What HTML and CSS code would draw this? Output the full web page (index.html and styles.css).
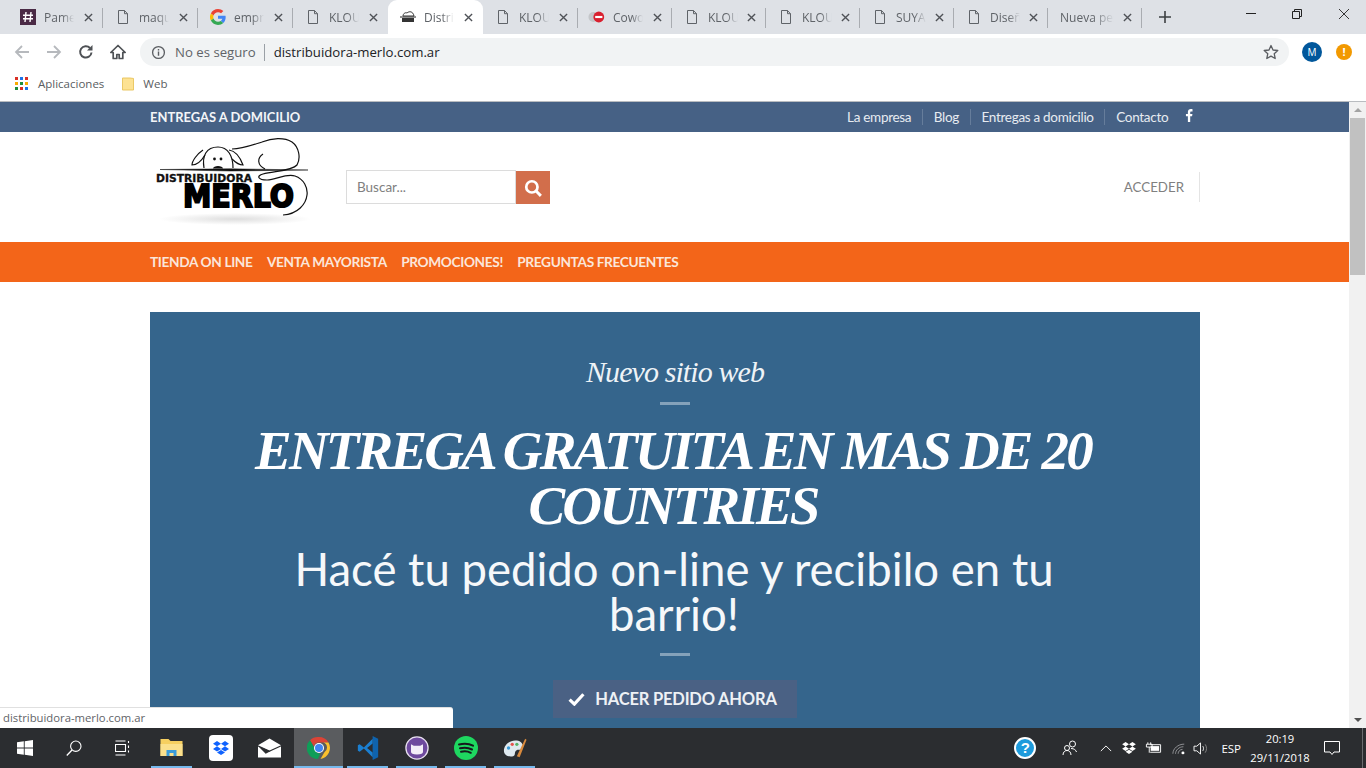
FILE: index.html
```html
<!DOCTYPE html>
<html lang="es">
<head>
<meta charset="utf-8">
<title>Distribuidora Merlo</title>
<link rel="stylesheet" href="styles.css">
</head>
<body>
<svg class="defs" width="0" height="0" aria-hidden="true">
  <symbol id="doc" viewBox="0 0 16 16"><path d="M3.500 1.500h6l3 3.200v9.800h-9zM9.500 1.500v3.200h3" fill="none" stroke="#5f6368" stroke-width="1"/></symbol>
  <symbol id="x" viewBox="0 0 10 10"><path d="M1 1l8 8M9 1l-8 8" fill="none" stroke="#4f5257" stroke-width="1.500"/></symbol>
</svg>
<div class="browser">
  <div class="tabstrip">
    <div class="tab"><svg class="fav" viewBox="0 0 16 16"><rect width="16" height="16" fill="#4a2a45"/><path d="M6 3L5 13M11 3l-1 10M3 6.300h10M3 9.800h10" stroke="#fff" stroke-width="1.400"/></svg><span class="ttl">Pamela</span><svg class="cl"><use href="#x"/></svg></div>
    <div class="tab"><svg class="fav"><use href="#doc"/></svg><span class="ttl">maquina</span><svg class="cl"><use href="#x"/></svg></div>
    <div class="tab"><svg class="fav" viewBox="0 0 48 48"><path fill="#ea4335" d="M24 9.500c3.500 0 6.700 1.300 9.200 3.400l6.800-6.800C35.900 2.400 30.300 0 24 0 14.600 0 6.500 5.400 2.600 13.200l7.900 6.100C12.400 13.700 17.700 9.500 24 9.500z"/><path fill="#4285f4" d="M47 24.500c0-1.600-.2-3.200-.4-4.500H24v9h12.900c-.6 3-2.300 5.500-4.800 7.200l7.700 6C44.300 37.600 47 31.600 47 24.500z"/><path fill="#fbbc05" d="M10.500 28.700a14.400 14.400 0 0 1 0-9.400l-7.900-6.100a24 24 0 0 0 0 21.600z"/><path fill="#34a853" d="M24 48c6.500 0 11.900-2.100 15.800-5.800l-7.700-6c-2.100 1.400-4.900 2.300-8.100 2.300-6.300 0-11.600-4.200-13.500-9.800l-7.900 6.100C6.500 42.600 14.600 48 24 48z"/></svg><span class="ttl">empresa</span><svg class="cl"><use href="#x"/></svg></div>
    <div class="tab tab-last"><svg class="fav"><use href="#doc"/></svg><span class="ttl">KLOUD</span><svg class="cl"><use href="#x"/></svg></div>
    <div class="tab tab-active"><svg class="fav" viewBox="0 0 16 16"><path d="M3 7c0-2 2-4 4-3 2-2 6-2 7 3z" fill="none" stroke="#333" stroke-width="1"/><path d="M0 8h16" stroke="#222" stroke-width="1"/><rect x="2" y="9" width="12" height="4" fill="#333"/></svg><span class="ttl">Distribuidora</span><svg class="cl"><use href="#x"/></svg></div>
    <div class="tab tab-after"><svg class="fav"><use href="#doc"/></svg><span class="ttl">KLOUD</span><svg class="cl"><use href="#x"/></svg></div>
    <div class="tab"><svg class="fav fav-wide" viewBox="0 0 20 16"><circle cx="6" cy="8" r="5.500" fill="#c4c6c9"/><circle cx="12" cy="8" r="6" fill="#d9202f"/><rect x="8" y="6.800" width="8" height="2.400" fill="#fff"/></svg><span class="ttl ttl-s">Coworking</span><svg class="cl"><use href="#x"/></svg></div>
    <div class="tab"><svg class="fav"><use href="#doc"/></svg><span class="ttl">KLOUD</span><svg class="cl"><use href="#x"/></svg></div>
    <div class="tab"><svg class="fav"><use href="#doc"/></svg><span class="ttl">KLOUD</span><svg class="cl"><use href="#x"/></svg></div>
    <div class="tab"><svg class="fav"><use href="#doc"/></svg><span class="ttl">SUYAI</span><svg class="cl"><use href="#x"/></svg></div>
    <div class="tab"><svg class="fav"><use href="#doc"/></svg><span class="ttl">Diseño</span><svg class="cl"><use href="#x"/></svg></div>
    <div class="tab tab-nofav"><span class="ttl ttl-w">Nueva pestaña</span><svg class="cl"><use href="#x"/></svg></div>
    <svg class="plus" viewBox="0 0 12 12"><path d="M6 0v12M0 6h12" stroke="#3c4043" stroke-width="1.600"/></svg>
    <div class="winctl">
      <svg viewBox="0 0 10 10"><path d="M0 4.500h10" stroke="#222" stroke-width="1"/></svg>
      <svg viewBox="0 0 10 10"><path d="M.5 2.500h7v7h-7zM2.500 2.500v-2h7v7h-2" fill="none" stroke="#222"/></svg>
      <svg viewBox="0 0 10 10"><path d="M0 0l10 10M10 0L0 10" stroke="#222" stroke-width=".9"/></svg>
    </div>
  </div>
  <div class="toolbar">
    <svg class="tb" viewBox="0 0 16 16"><path d="M15 8H2M8 2L2 8l6 6" fill="none" stroke="#b6b9bd" stroke-width="1.800"/></svg>
    <svg class="tb" viewBox="0 0 16 16"><path d="M1 8h13M8 2l6 6-6 6" fill="none" stroke="#b6b9bd" stroke-width="1.800"/></svg>
    <svg class="tb" viewBox="0 0 16 16"><path d="M13.500 8.500A5.700 5.700 0 1 1 12 4" fill="none" stroke="#4e5155" stroke-width="2"/><path d="M14.500 1v5.500h-5.500z" fill="#4e5155"/></svg>
    <svg class="tb" viewBox="0 0 16 16"><path d="M8 1.500L.8 8.500h2.400v6h3.600v-4h2.400v4h3.600v-6h2.400z" fill="none" stroke="#4e5155" stroke-width="1.700" stroke-linejoin="round"/></svg>
    <div class="omnibox">
      <svg class="info" viewBox="0 0 16 16"><circle cx="8" cy="8" r="6.300" fill="none" stroke="#5a5d61" stroke-width="1.400"/><path d="M8 7v4.500M8 4.300v1.500" stroke="#5a5d61" stroke-width="1.500"/></svg>
      <span class="insecure">No es seguro</span>
      <span class="url">distribuidora-merlo.com.ar</span>
      <svg class="star" viewBox="0 0 16 16"><path d="M8 1.500l2 4.500 4.800.5-3.600 3.200 1 4.800L8 12.100 3.800 14.500l1-4.800L1.200 6.500 6 6z" fill="none" stroke="#5a5d61" stroke-width="1.300" stroke-linejoin="round"/></svg>
    </div>
    <span class="avatar">M</span>
    <span class="alert">!</span>
  </div>
  <div class="bookmarks">
    <svg class="apps" viewBox="0 0 13 13"><g><rect width="3" height="3" fill="#d93025"/><rect x="5" width="3" height="3" fill="#1a73e8"/><rect x="10" width="3" height="3" fill="#d93025"/><rect y="5" width="3" height="3" fill="#f9ab00"/><rect x="5" y="5" width="3" height="3" fill="#1e8e3e"/><rect x="10" y="5" width="3" height="3" fill="#f9ab00"/><rect y="10" width="3" height="3" fill="#1e8e3e"/><rect x="5" y="10" width="3" height="3" fill="#d93025"/><rect x="10" y="10" width="3" height="3" fill="#1a73e8"/></g></svg>
    <span class="bm">Aplicaciones</span>
    <svg class="folder" viewBox="0 0 13 14"><path d="M.5.500h8l4 .5v12.500H.5z" fill="#fde293" stroke="#e8c35a"/></svg>
    <span class="bm">Web</span>
  </div>
</div>

<div class="viewport">
  <main class="page">
    <div class="topbar">
      <strong class="topbar-title">ENTREGAS A DOMICILIO</strong>
      <nav class="toplinks">
        <a>La empresa</a><a>Blog</a><a>Entregas a domicilio</a><a>Contacto</a>
        <svg class="fb" viewBox="0 0 8 14"><path d="M5.300 14V7.800h2l.4-2.500H5.300V3.800c0-.8.200-1.200 1.200-1.200h1.300V.2C7.500.100 6.800 0 6 0 4.100 0 2.800 1.100 2.800 3.300v2H.7v2.500h2.100V14z" fill="#fff"/></svg>
      </nav>
    </div>
    <header class="masthead">
      <svg class="logo" viewBox="0 0 170 100">
        <defs><radialGradient id="sh"><stop offset="0" stop-color="#dedede"/><stop offset="1" stop-color="#fff"/></radialGradient></defs>
        <ellipse cx="85" cy="87" rx="76" ry="6" fill="url(#sh)"/>
        <path d="M10 37.500L80 36.800 158 38 80 39z" fill="#111" stroke="#111" stroke-width=".5"/>
        <g fill="none" stroke="#111" stroke-width="1.200">
          <path d="M54 36C52 24 56 15 68 15 78 15 83 24 83 36"/>
          <path d="M53 18C47 22 42 29 42 33 47 33 52 28 55 23"/>
          <path d="M79 18C86 19 90 25 93 33 88 33 84 29 82 27"/>
          <path d="M82 17C92 17 100 14 112 10 122 6 134 5 142 10 149 15 151 26 147 33 142 39 124 39 113 42 106 44 108 48 117 48 126 48 136 41 145 44 154 47 158 56 157 63 156 72 148 82 133 83"/>
          <path d="M113 22C107 26 107 33 115 37"/>
        </g>
        <circle cx="64.500" cy="27" r="1.400" fill="#111"/><circle cx="71" cy="27" r="1.400" fill="#111"/>
        <path d="M63 36.500c0-3.500 10-3.500 10 0z" fill="#111"/>
        <text class="logo-small" x="6" y="49.500" textLength="96" lengthAdjust="spacingAndGlyphs">DISTRIBUIDORA</text>
        <text class="logo-big" x="33" y="75" textLength="111" lengthAdjust="spacingAndGlyphs">MERLO</text>
      </svg>
      <form class="search">
        <span class="search-input">Buscar...</span>
        <span class="search-btn"><svg viewBox="0 0 16 16"><circle cx="7" cy="7" r="5" fill="none" stroke="#fff" stroke-width="2.400"/><path d="M10.500 10.500L15 15" stroke="#fff" stroke-width="2.600"/></svg></span>
      </form>
      <a class="login">ACCEDER</a>
    </header>
    <nav class="mainnav">
      <a>TIENDA ON LINE</a><a>VENTA MAYORISTA</a><a>PROMOCIONES!</a><a>PREGUNTAS FRECUENTES</a>
    </nav>
    <section class="hero">
      <p class="kicker">Nuevo sitio web</p>
      <i class="rule"></i>
      <h1>ENTREGA GRATUITA EN MAS DE 20 COUNTRIES</h1>
      <h2>Hacé tu pedido on-line y recibilo en tu barrio!</h2>
      <i class="rule rule-2"></i>
      <a class="cta"><svg viewBox="0 0 16 13"><path d="M1.500 7l4.500 4.300L14.500 2" fill="none" stroke="#fff" stroke-width="3"/></svg>HACER PEDIDO AHORA</a>
    </section>
  </main>
  <div class="scrollbar">
    <span class="arrow-up"></span>
    <span class="thumb"></span>
    <span class="arrow-down"></span>
  </div>
  <div class="status">distribuidora-merlo.com.ar</div>
</div>

<footer class="taskbar">
  <div class="slot"><svg class="ic" viewBox="0 0 16 16"><path d="M0 2.300L6.800 1.300V7.500H0zM7.700 1.200L16 0V7.500H7.700zM0 8.400h6.800v6.300L0 13.700zM7.700 8.400H16V16L7.700 14.800z" fill="#fff"/></svg></div>
  <div class="slot"><svg class="ic" viewBox="0 0 16 16"><circle cx="9.800" cy="6.200" r="5.200" fill="none" stroke="#fff" stroke-width="1.100"/><path d="M6 10L.8 15.500" stroke="#fff" stroke-width="1.300"/></svg></div>
  <div class="slot"><svg class="ic" viewBox="0 0 16 16"><path d="M.5 4.500h10v7H.5zM.5 1h10M.5 15h10M13.500 1v2M13.500 5.500v2.500M13.500 10.500v2" fill="none" stroke="#fff" stroke-width="1.100"/></svg></div>
  <div class="slot slot-app on"><svg class="ic ic-l" viewBox="0 0 22 20"><path d="M0 1h8l2 2h12v15H0z" fill="#f6cf60"/><path d="M0 6h22v12H0z" fill="#fbe08c"/><path d="M6 12h10v6H6z" fill="#3a9bd9"/><path d="M9 15h4v3H9z" fill="#fbe08c"/></svg></div>
  <div class="slot slot-app"><span class="dbx"><svg viewBox="0 0 16 14"><path d="M4 0L0 2.700l4 2.600 4-2.600zM12 0L8 2.700l4 2.600 4-2.600zM0 8l4 2.600L8 8 4 5.300zM12 5.300L8 8l4 2.600L16 8zM4 11.500L8 14l4-2.500L8 9z" fill="#0f62fe"/></svg></span></div>
  <div class="slot slot-app"><svg class="ic ic-l" viewBox="0 0 24 20"><path d="M0 7L12 0l12 7-12 5.500z" fill="#fff"/><path d="M0 8.500v11.500h24V8.500L12 14z" fill="#fff"/><path d="M0 8l13 5.500L8 16z" fill="#2b2d30"/></svg></div>
  <div class="slot slot-app on active"><svg class="ic ic-xl" viewBox="0 0 48 48"><path d="M24 2a22 22 0 0 1 19 11H24a11 11 0 0 0-10.500 7.600L6 8.500A22 22 0 0 1 24 2z" fill="#db4437"/><path d="M43 13a22 22 0 0 1-16 32.800l7.500-13A11 11 0 0 0 33 13z" fill="#fbc02d"/><path d="M6 8.500l9 16a11 11 0 0 0 12 10.500L21.500 46A22 22 0 0 1 6 8.500z" fill="#0f9d58"/><circle cx="24" cy="24" r="10" fill="#fff"/><circle cx="24" cy="24" r="8" fill="#4285f4"/></svg></div>
  <div class="slot slot-app on"><svg class="ic ic-xl" viewBox="0 0 24 26"><path d="M17 0l6 3v20l-6 3z" fill="#0f63ad"/><path d="M17 3L7.500 12.500 3 9 1 10v6l2 1 4.500-3.500L17 23V18l-6-5 6-5z" fill="#1b7fd1"/></svg></div>
  <div class="slot slot-app on"><svg class="ic ic-xl" viewBox="0 0 26 26"><circle cx="13" cy="13" r="12" fill="#6e4a9e" stroke="#e8e0f0" stroke-width="1.400"/><path d="M6.500 9l3 1.500h7l3-1.500v8c0 2-2 3-6.500 3s-6.500-1-6.500-3z" fill="#f3eef8"/></svg></div>
  <div class="slot slot-app on"><svg class="ic ic-xl" viewBox="0 0 24 24"><circle cx="12" cy="12" r="12" fill="#1ed760"/><path d="M5 8.500c5-1.300 10-1 14 1.200M6 12.300c4-1 8.500-.7 12 1.200M7 15.800c3.500-.8 7-.5 9.800 1" fill="none" stroke="#16191c" stroke-width="2" stroke-linecap="round"/></svg></div>
  <div class="slot slot-app on"><svg class="ic ic-xl" viewBox="0 0 26 26"><path d="M1 16C1 9 8 4 15 5c6 1 8 6 6 9-2 2-5 0-7 2s0 5-3 6c-5 1-10-1-10-6z" fill="#dfe9ef"/><circle cx="6" cy="13" r="1.800" fill="#3a9bd9"/><circle cx="10" cy="9" r="1.800" fill="#e6534e"/><circle cx="15" cy="9" r="1.800" fill="#57b36a"/><path d="M15 22L24 3l1.500 1L18 23z" fill="#d98a3d"/></svg></div>
  <div class="tray">
    <span class="help">?</span>
    <svg class="tr tr-people" viewBox="0 0 16 16"><circle cx="10.500" cy="4" r="3" fill="none" stroke="#fff"/><circle cx="5" cy="8" r="2.500" fill="none" stroke="#fff"/><path d="M1 15c0-3 2-4.500 4-4.500s4 1.500 4 4.500M9 8.500c3 0 5 1.500 5.500 3.500" fill="none" stroke="#fff"/></svg>
    <svg class="tr tr-chev" viewBox="0 0 14 8"><path d="M1 7l6-6 6 6" fill="none" stroke="#fff" stroke-width="1.100"/></svg>
    <svg class="tr tr-dbx" viewBox="0 0 16 14"><path d="M4 0L0 2.700l4 2.600 4-2.600zM12 0L8 2.700l4 2.600 4-2.600zM0 8l4 2.600L8 8 4 5.300zM12 5.300L8 8l4 2.600L16 8zM4 11.500L8 14l4-2.500L8 9z" fill="#fff"/></svg>
    <svg class="tr tr-bat" viewBox="0 0 18 12"><path d="M3 0v2M6 0v2M1.500 2h6v3h-6zM4.500 5v6" fill="none" stroke="#fff"/><path d="M5.500 2.500h11v8h-11" fill="none" stroke="#fff"/><rect x="6" y="4" width="9" height="5" fill="#fff"/></svg>
    <svg class="tr tr-wifi" viewBox="0 0 16 14"><path d="M1 13c0-6 6-11 13-11M4 13c0-4 4-8 9-8M7 13c0-2.500 2-5 5-5" fill="none" stroke="#9a9c9f" stroke-width="1"/><circle cx="12.500" cy="12" r="1.700" fill="#fff"/></svg>
    <svg class="tr tr-vol" viewBox="0 0 16 14"><path d="M1 4.500h3L8 1v12L4 9.500H1z" fill="none" stroke="#fff"/><path d="M10.500 4.500c1 1.500 1 3.500 0 5" fill="none" stroke="#fff"/><path d="M13 2.500c2 2.500 2 6.500 0 9" fill="none" stroke="#888"/></svg>
    <span class="lang">ESP</span>
    <span class="clock"><span>20:19</span><span>29/11/2018</span></span>
    <svg class="tr tr-note" viewBox="0 0 16 16"><path d="M.5 1.500h15v10.500H10L8 14.500 6 12H.5z" fill="none" stroke="#fff"/></svg>
    <i class="showdesk"></i>
  </div>
</footer>
</body>
</html>
```
FILE: styles.css
```css
* { box-sizing: border-box; }
html, body { margin: 0; height: 768px; overflow: hidden; }
body { display: flex; flex-direction: column; background: #fff; font-family: "Open Sans", "Noto Sans", sans-serif; }
.defs { position: absolute; }
a { color: inherit; text-decoration: none; }

/* browser chrome */
.browser { flex: 0 0 101px; display: flex; flex-direction: column; }
.tabstrip { flex: 0 0 34px; display: flex; align-items: center; padding-left: 8px; background: #dee1e6; }
.tab { flex: 0 0 94px; height: 34px; display: flex; align-items: center; padding: 0 10px 0 12px; font-size: 12px; color: #5f6368; position: relative; }
.tab:nth-child(-n+6) { flex-basis: 95px; }
.tab::after { content: ""; position: absolute; right: 0; top: 8px; height: 20px; width: 1px; background: #a9acb1; }
.tab-last::after, .tab-active::after { display: none; }
.tab-active { background: #fff; border-radius: 9px 9px 0 0; }
.fav { width: 16px; height: 16px; flex: none; margin-right: 8px; }
.fav-wide { width: 18px; margin-right: 7px; margin-left: -2px; }
.ttl { width: 30px; flex: none; overflow: hidden; white-space: nowrap; -webkit-mask-image: linear-gradient(90deg, #000 60%, transparent); mask-image: linear-gradient(90deg, #000 60%, transparent); }
.ttl-s { width: 30px; }
.ttl-w { width: 54px; }
.cl { width: 9px; height: 9px; flex: none; margin-left: auto; }
.plus { width: 12px; height: 12px; margin-left: 17px; flex: none; }
.winctl { margin-left: auto; display: flex; align-self: flex-start; padding: 9px 17px 0 0; gap: 36px; }
.winctl svg { width: 10px; height: 10px; }
.winctl svg:last-child { margin-left: 1px; }
.toolbar { flex: 0 0 34px; display: flex; align-items: center; padding: 2px 0 0 14px; background: #fff; }
.tb { width: 16px; height: 16px; margin-right: 16px; flex: none; }
.omnibox { margin: 0 0 0 -2px; width: 1149px; height: 28px; border-radius: 14px; background: #f1f3f4; display: flex; align-items: center; padding: 0 10px 0 11px; font-size: 13.200px; }
.info { width: 15px; height: 15px; flex: none; margin-right: 9px; }
.insecure { color: #5f6368; padding-right: 8px; border-right: 1px solid #9aa0a6; line-height: 17px; margin-right: 9px; }
.url { color: #202124; }
.star { width: 16px; height: 16px; margin-left: auto; }
.avatar { width: 20px; height: 20px; border-radius: 50%; background: #01579b; color: #fff; font-size: 10px; text-align: center; line-height: 20px; margin: 0 0 0 13px; flex: none; }
.alert { width: 16px; height: 16px; border-radius: 50%; background: #f29900; color: #fff; font-size: 11px; font-weight: 700; text-align: center; line-height: 16px; margin: 0 0 0 14px; flex: none; }
.bookmarks { flex: 0 0 33px; display: flex; align-items: center; padding: 0 0 2px 15px; font-size: 11.500px; color: #5f6368; background: #fff; }
.apps { width: 13px; height: 13px; margin-right: 10px; }
.bm { color: #5a5d61; }
.folder { width: 12px; height: 14px; margin: 0 9px 0 18px; }

/* page */
.viewport { flex: 1; min-height: 0; display: flex; position: relative; border-top: 1px solid #b9bcc0; overflow: hidden; }
.page { flex: 1; min-width: 0; font-family: Lato, "Open Sans", sans-serif; }
.topbar { height: 30px; background: #466185; color: #fff; display: flex; align-items: center; justify-content: space-between; padding: 0 149px 0 150px; }
.topbar-title { font-size: 12.950px; font-weight: 700; color: #f3f5f8; }
.toplinks { display: flex; align-items: center; font-size: 13.500px; letter-spacing: -.3px; color: #e6ebf1; padding-right: 1px; }
.toplinks a { padding: 0 10.750px; border-right: 1px solid #667d9b; line-height: 16px; }
.toplinks a:nth-child(4) { border-right: 0; }
.fb { width: 8px; height: 13px; margin: 0 6px 3px 6px; }
.masthead { height: 110px; display: flex; align-items: center; padding: 0 149px 0 150px; }
.logo { width: 170px; height: 100px; flex: none; margin-top: -10px; }
.logo-small { font: 700 10px "DejaVu Sans", sans-serif; fill: #111; stroke: #111; stroke-width: .3px; }
.logo-big { font: 700 32px "DejaVu Sans", sans-serif; fill: #000; stroke: #000; stroke-width: 2px; }
.search { display: flex; margin: 0 0 0 26px; }
.search-input { width: 170px; height: 34px; border: 1px solid #dcdcdc; padding: 0 10px; font-size: 13.500px; line-height: 32px; color: #808080; }
.search-btn { width: 34px; height: 33px; align-self: flex-end; background: #d26e4b; display: flex; align-items: center; justify-content: center; }
.search-btn svg { width: 18px; height: 18px; }
.login { margin-left: auto; padding-right: 15px; border-right: 1px solid #e4e4e4; font-size: 13.300px; line-height: 30px; color: #808080; }
.mainnav { height: 40px; background: #f36519; display: flex; align-items: center; gap: 14.400px; padding: 0 0 2px 150px; font-size: 13.700px; font-weight: 700; letter-spacing: -.37px; color: #fbe6da; }
.hero { margin: 30px 149px 0 150px; height: 500px; background: #35658c; color: #fff; display: flex; flex-direction: column; align-items: center; padding-top: 40px; text-align: center; }
.kicker { margin: 0; font: italic 30px/40px "Liberation Serif", serif; letter-spacing: -.9px; color: #eef3f7; }
.rule { display: block; width: 30px; height: 3px; background: rgba(255, 255, 255, .4); margin-top: 10px; }
h1 { margin: 18px 0 0; width: 900px; padding-right: 4px; font: italic 700 55px/55px "Liberation Serif", serif; letter-spacing: -2.850px; color: #fff; }
h2 { margin: 13px 0 0; width: 800px; padding-right: 2px; font: 400 45.500px/45px Lato, sans-serif; color: #f6f8fa; }
.rule-2 { margin-top: 17px; }
.cta { margin-top: 24px; width: 244px; height: 38px; padding: 0 5px 1px 0; background: #4a6184; display: flex; align-items: center; justify-content: center; gap: 10px; font-size: 16.500px; font-weight: 700; letter-spacing: -.2px; color: #eef1f5; }
.cta svg { width: 17px; height: 14px; }

/* scrollbar and status bubble */
.scrollbar { flex: 0 0 17px; background: #f1f1f1; display: flex; flex-direction: column; align-items: center; position: relative; }
.arrow-up { margin-top: 6px; border: 4px solid transparent; border-top: 0; border-bottom: 4px solid #a3a3a3; }
.thumb { width: 15px; height: 157px; margin-top: 6px; background: #c1c1c1; }
.arrow-down { margin-top: auto; margin-bottom: 6px; border: 4px solid transparent; border-bottom: 0; border-top: 4px solid #505050; }
.status { position: absolute; left: 0; bottom: 0; width: 453px; height: 21px; background: #fff; border-top: 1px solid #e0e0e0; border-radius: 0 3px 0 0; padding-left: 3px; font-size: 11.300px; line-height: 20px; color: #5f6368; }

/* taskbar */
.taskbar { flex: 0 0 40px; background: #2b2d30; display: flex; color: #fff; }
.slot { flex: 0 0 49px; height: 40px; display: flex; align-items: center; justify-content: center; position: relative; }
.slot.on::after { content: ""; position: absolute; left: 4px; right: 4px; bottom: 0; height: 2px; background: #76b9ed; }
.slot.active { background: #5a5c5f; }
.slot.active::after { left: 0; right: 0; }
.ic { width: 16px; height: 16px; }
.ic-l { width: 23px; height: 20px; }
.ic-xl { width: 24px; height: 24px; }
.dbx { width: 24px; height: 26px; background: #fff; border-radius: 4px; display: flex; align-items: center; justify-content: center; }
.dbx svg { width: 16px; height: 14px; }
.tray { margin-left: auto; display: flex; align-items: center; position: relative; padding-right: 4px; }
.help { width: 22px; height: 22px; border-radius: 50%; background: #1e9bdc; border: 2px solid #fff; font: 700 15px/18px "Liberation Sans", sans-serif; text-align: center; margin-right: 26px; }
.tr { flex: none; }
.tr-people { width: 16px; height: 16px; margin-right: 22px; }
.tr-chev { width: 12px; height: 7px; margin-right: 10px; }
.tr-dbx { width: 14px; height: 12px; margin-right: 9px; }
.tr-bat { width: 17px; height: 12px; margin-right: 10px; }
.tr-wifi { width: 14px; height: 13px; margin-right: 7px; }
.tr-vol { width: 15px; height: 13px; margin-right: 13px; }
.lang { font-size: 11.500px; margin-right: 9px; }
.clock { display: flex; flex-direction: column; align-items: center; width: 60px; font-size: 11.200px; line-height: 19px; margin-right: 14px; }
.tr-note { width: 16px; height: 16px; margin-right: 22px; }
.showdesk { position: absolute; right: 3px; top: 0; height: 40px; width: 1px; background: #6a6c6f; }
```
